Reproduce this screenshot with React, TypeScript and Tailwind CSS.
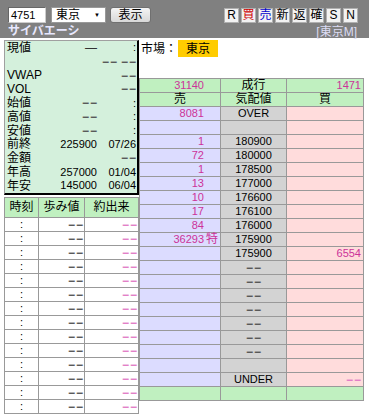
import React from "react";

const font = "font-['Liberation_Sans','Noto_Sans_CJK_JP',sans-serif]";

function Dash({ pink = false }: { pink?: boolean }) {
  return (
    <span
      className={`inline-flex gap-[1px] align-middle text-[12px] leading-[12px] ${pink ? "text-[#e27cc6]" : "text-[#555]"}`}
    >
      <span className="font-bold">−</span>
      <span className="font-bold">−</span>
    </span>
  );
}

const infoRows: { label: string; value?: React.ReactNode; time?: React.ReactNode }[] = [
  { label: "現値", value: <span className="text-[12px] text-[#333]">—</span>, time: ":" },
  { label: "", time: <span className="inline-flex gap-[4px]"><Dash /><Dash /></span> },
  { label: "VWAP", time: <Dash /> },
  { label: "VOL", time: <Dash /> },
  { label: "始値", value: <Dash />, time: ":" },
  { label: "高値", value: <Dash />, time: ":" },
  { label: "安値", value: <Dash />, time: ":" },
  { label: "前終", value: "225900", time: "07/26" },
  { label: "金額", time: <Dash /> },
  { label: "年高", value: "257000", time: "01/04" },
  { label: "年安", value: "145000", time: "06/04" },
];

type BoardRow = {
  sell?: string;
  mark?: string;
  price?: React.ReactNode;
  buy?: React.ReactNode;
  kind?: "head" | "foot";
};

const board: BoardRow[] = [
  { sell: "31140", price: "成行", buy: "1471", kind: "head" },
  { sell: "売", price: "気配値", buy: "買", kind: "head" },
  { sell: "8081", price: "OVER" },
  {},
  { sell: "1", price: "180900" },
  { sell: "72", price: "180000" },
  { sell: "1", price: "178500" },
  { sell: "13", price: "177000" },
  { sell: "10", price: "176600" },
  { sell: "17", price: "176100" },
  { sell: "84", price: "176000" },
  { sell: "36293", mark: "特", price: "175900" },
  { price: "175900", buy: "6554" },
  { price: <Dash /> },
  { price: <Dash /> },
  { price: <Dash /> },
  { price: <Dash /> },
  { price: <Dash /> },
  { price: <Dash /> },
  { price: <Dash /> },
  {},
  { price: "UNDER", buy: <Dash pink /> },
  { kind: "foot" },
];

export default function App() {
  return (
    <div className={`w-[369px] h-[417px] bg-white text-black overflow-hidden ${font}`}>
      {/* Header */}
      <div className="h-[38px] bg-[#808080] pt-[7px]">
        <div className="flex items-center justify-between h-[16px] pl-[8px] pr-[11px]">
          <div className="flex items-center">
            <div className="w-[38px] h-[16px] bg-white border border-[#666] border-r-[#ccc] border-b-[#ccc] text-[11px] leading-[14px] pl-[2px]">
              4751
            </div>
            <div className="ml-[5px] w-[55px] h-[16px] bg-white border border-[#999] flex items-center justify-between pl-[4px] pr-[5px] text-[12px]">
              <span>東京</span>
              <span className="text-[6px]">▼</span>
            </div>
            <div className="ml-[4px] w-[41px] h-[16px] rounded-[3px] border border-[#707070] bg-gradient-to-b from-[#f4f4f4] to-[#d8d8d8] flex items-center justify-center text-[12px]">
              表示
            </div>
          </div>
          <div className="flex gap-[2px]">
            {[
              ["R", "text-black"],
              ["買", "text-[#d00000]"],
              ["売", "text-[#0000cc]"],
              ["新", "text-black"],
              ["返", "text-black"],
              ["確", "text-black"],
              ["S", "text-black"],
              ["N", "text-black"],
            ].map(([t, c]) => (
              <div
                key={t}
                className={`w-[15px] h-[15px] bg-[#f2f2f2] border border-[#b0b0b0] flex items-center justify-center text-[12px] leading-none ${c}`}
              >
                {t}
              </div>
            ))}
          </div>
        </div>
        <div className="flex items-end justify-between h-[15px] pl-[8px] pr-[12px]">
          <span className="text-[12px] font-bold text-[#e8e8ff] leading-[14px]">サイバエーシ</span>
          <span className="text-[12px] text-[#dcdcf4] leading-[12px]">[東京M]</span>
        </div>
      </div>

      {/* Body */}
      <div className="flex mt-[2px]">
        <div className="w-[139px] pl-[4px] shrink-0">
          {/* Info panel */}
          <div className="w-[135px] bg-[#d4f0dc] border-l border-t border-[#a0a0a0] border-r-2 border-b-2 border-r-black border-b-black">
            {infoRows.map((r, i) => (
              <div key={i} className="flex items-center h-[13.8px] text-[11px]">
                <span className="w-[36px] pl-[2px] text-[12px] leading-none">{r.label}</span>
                <span className="w-[56px] text-right leading-none">{r.value}</span>
                <span className="flex-1 text-right leading-none pr-[1px]">{r.time}</span>
              </div>
            ))}
          </div>

          {/* Tick table */}
          <div className="mt-[2px] w-[135px] border-l border-t border-[#999]">
            <div className="flex h-[20px] bg-[#c0f0c0] border-b border-[#999] text-[12px]">
              <div className="w-[34px] border-r border-[#999] flex items-center justify-center">時刻</div>
              <div className="w-[46px] border-r border-[#999] flex items-center justify-center">歩み値</div>
              <div className="w-[54px] border-r border-[#999] flex items-center justify-center">約出来</div>
            </div>
            {Array.from({ length: 14 }).map((_, i) => (
              <div key={i} className="flex h-[14px] border-b border-[#999] text-[11px] leading-[13px]">
                <div className="w-[34px] border-r border-[#999] text-center">:</div>
                <div className="w-[46px] border-r border-[#999] text-right pr-[1px]">
                  <Dash />
                </div>
                <div className="w-[54px] border-r border-[#999] text-right pr-[1px]">
                  <Dash pink />
                </div>
              </div>
            ))}
          </div>
        </div>

        {/* Right side */}
        <div className="flex-1">
          <div className="flex items-center h-[17px] pl-[2px]">
            <span className="text-[12px]">市場：</span>
            <span className="ml-[1px] w-[40px] h-[17px] bg-[#ffcc00] flex items-center justify-center text-[12px]">
              東京
            </span>
          </div>

          <div className="mt-[21px] w-[225px] border-l border-t border-r border-[#999]">
            {board.map((r, i) => {
              const head = r.kind === "head";
              const foot = r.kind === "foot";
              const green = head || foot;
              const cjk = i === 1;
              return (
                <div key={i} className="flex h-[14px] border-b border-[#999] text-[11px] leading-[13px]">
                  <div
                    className={`w-[81px] border-r border-[#999] flex ${cjk ? "justify-center" : "justify-end"} ${green ? "bg-[#c0f0c0]" : "bg-[#dcdcff]"} ${cjk ? "text-black text-[12px]" : "text-[#cc3399]"}`}
                  >
                    <span>{r.sell}</span>
                    {!cjk && <span className="w-[16px] pl-[2px] text-[12px]">{r.mark}</span>}
                  </div>
                  <div
                    className={`w-[66px] border-r border-[#999] text-center ${green ? "bg-[#c0f0c0] text-[12px]" : "bg-[#d3d3d3]"}`}
                  >
                    {r.price}
                  </div>
                  <div
                    className={`flex-1 ${cjk ? "text-center text-[12px] text-black" : "text-right pr-[2px] text-[#cc3399]"} ${green ? "bg-[#c0f0c0]" : "bg-[#ffdcdc]"}`}
                  >
                    {r.buy}
                  </div>
                </div>
              );
            })}
          </div>
        </div>
      </div>
    </div>
  );
}
